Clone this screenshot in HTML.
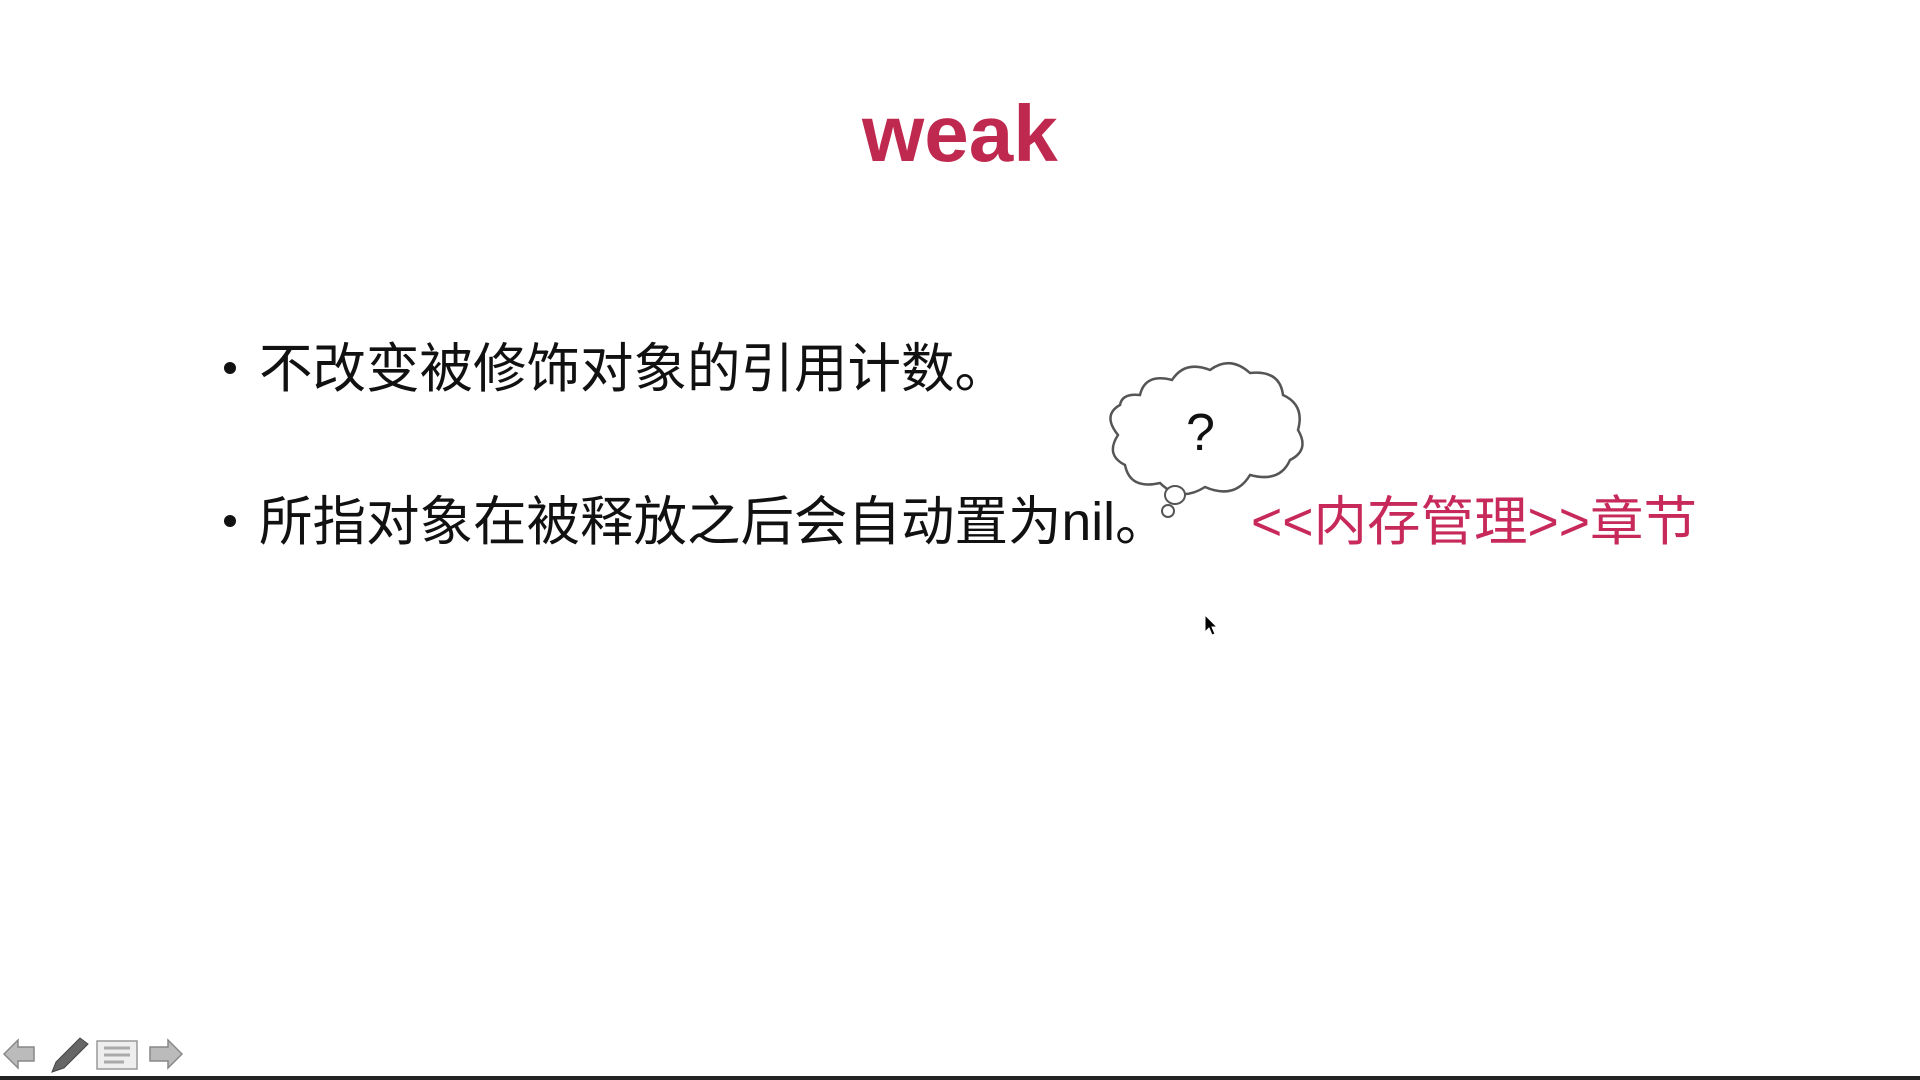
<!DOCTYPE html>
<html><head><meta charset="utf-8"><style>
html,body{margin:0;padding:0;width:1920px;height:1080px;background:#fff;overflow:hidden;position:relative}
.t{position:absolute;font-family:"Liberation Sans","Noto Sans CJK SC",sans-serif;white-space:nowrap}
#title{left:862px;top:84px;font-size:80px;font-weight:bold;color:#c0294f;line-height:100px}
.b{font-size:53.5px;color:#111;line-height:60px}
.dot{position:absolute;width:12px;height:12px;border-radius:50%;background:#111}
#red{left:1251px;top:493px;font-size:53.5px;color:#c7295a;line-height:60px}
</style></head><body>
<div class="t" id="title">weak</div>
<div class="dot" style="left:224px;top:362px"></div>
<div class="t b" style="left:259px;top:340px">不改变被修饰对象的引用计数。</div>
<div class="dot" style="left:224px;top:515px"></div>
<div class="t b" style="left:259px;top:493px">所指对象在被释放之后会自动置为nil。</div>
<div class="t" id="red">&lt;&lt;内存管理&gt;&gt;章节</div>
<svg style="position:absolute;left:1100px;top:355px" width="220" height="180" viewBox="0 0 220 180">
<path d="M40 40 Q45 18 72 25 Q85 5 110 15 Q130 0 150 18 Q180 15 183 40 Q205 50 198 75 Q210 95 190 105 Q180 128 150 120 Q135 145 105 132 Q80 148 60 128 Q30 135 25 110 Q5 100 18 80 Q2 60 20 50 Q22 38 40 40 Z" fill="#fff" stroke="#555" stroke-width="2.5"/>
<ellipse cx="75" cy="140" rx="10" ry="9" fill="#fff" stroke="#555" stroke-width="2"/>
<circle cx="68" cy="156" r="6" fill="#fff" stroke="#555" stroke-width="2"/>
<text x="86" y="95" font-family="Liberation Sans,sans-serif" font-size="52" fill="#111">?</text>
</svg>
<svg style="position:absolute;left:1204px;top:614px" width="16" height="24" viewBox="0 0 16 24"><path d="M1 1 L1 18 L5 14 L8 21 L11 20 L8 13 L13 13 Z" fill="#000" stroke="#fff" stroke-width="1"/></svg>
<svg style="position:absolute;left:0;top:1030px" width="190" height="46" viewBox="0 0 190 46">
<path d="M4 24 L18 10 L18 17 L34 17 L34 31 L18 31 L18 38 Z" fill="#bbb" stroke="#888" stroke-width="1.5"/>
<path d="M52 42 L56 32 L80 8 L88 14 L64 38 Z" fill="#666" stroke="#444"/>
<rect x="97" y="11" width="40" height="28" fill="#eee" stroke="#999" stroke-width="1.5"/>
<path d="M104 18H130M104 25H130M104 32H124" stroke="#aaa" stroke-width="3"/>
<path d="M182 24 L168 10 L168 17 L150 17 L150 31 L168 31 L168 38 Z" fill="#bbb" stroke="#888" stroke-width="1.5"/>
</svg>
<div style="position:absolute;left:0;top:1076px;width:1920px;height:4px;background:#222"></div>
</body></html>
